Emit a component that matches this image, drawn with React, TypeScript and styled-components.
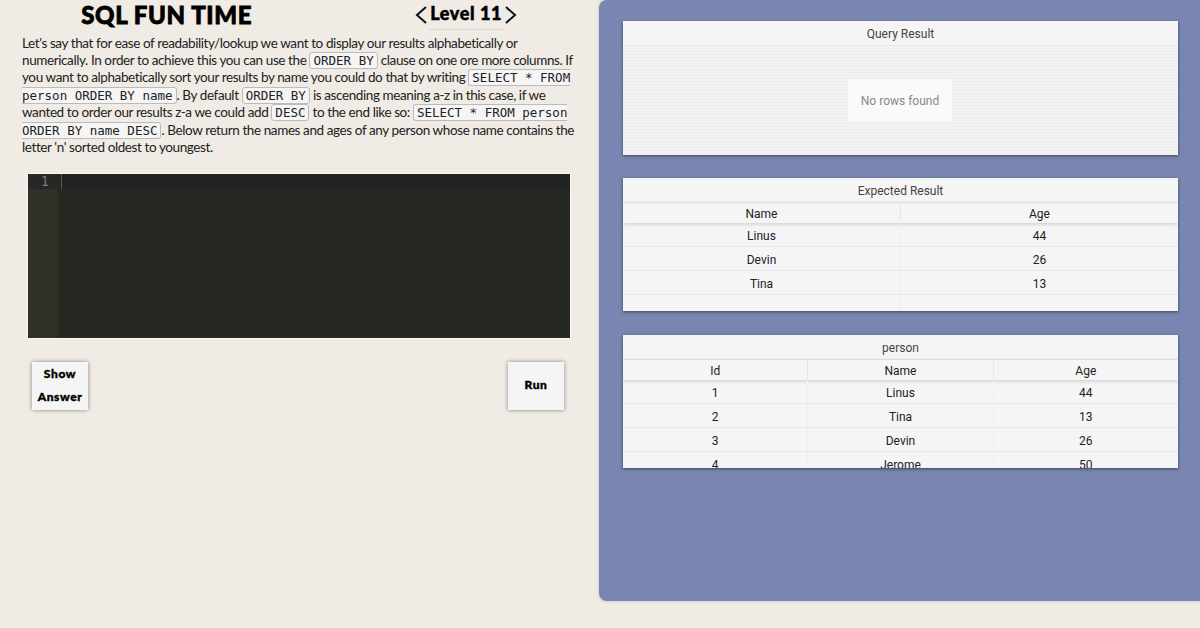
import * as React from 'react';
import styled, { createGlobalStyle } from 'styled-components';

const GlobalStyle = createGlobalStyle`
  html, body {
    margin: 0;
    padding: 0;
    height: 100%;
    background: #f0ebe4;
  }
`;

const Page = styled.div`
  display: flex;
  width: 1200px;
  height: 628px;
  overflow: hidden;
`;

const LeftColumn = styled.div`
  width: 599px;
  flex-shrink: 0;
`;

const Header = styled.div`
  display: flex;
  height: 32px;
`;

const Title = styled.h1`
  width: 335px;
  margin: 0;
  font-family: "Lato", sans-serif;
  font-weight: 900;
  font-size: 24px;
  line-height: 29px;
  letter-spacing: 0.6px;
  text-align: center;
  color: #000;
  -webkit-text-stroke: 0.8px #000;
`;

const LevelPicker = styled.div`
  width: 267px;
  height: 29px;
  display: flex;
  justify-content: center;
  align-items: center;
  gap: 2px;
`;

const Chevron = styled.svg`
  width: 12px;
  height: 18px;
  fill: none;
  stroke: #111;
  stroke-width: 2;
`;

const LevelLabel = styled.div`
  height: 29px;
  padding: 0 1px;
  font-family: "Lato", sans-serif;
  font-weight: 900;
  font-size: 18px;
  line-height: 27px;
  letter-spacing: 0.6px;
  color: #000;
  -webkit-text-stroke: 0.5px #000;
  box-shadow: 0 1px 1px rgba(0, 0, 0, 0.08);
`;

const Description = styled.p`
  width: 556px;
  margin: 3px 0 0 22px;
  font-family: "Lato", sans-serif;
  font-size: 13.5px;
  letter-spacing: -0.4px;
  line-height: 16.5px;
  color: #222;
`;

const Code = styled.code`
  font-family: "DejaVu Sans Mono", monospace;
  font-size: 12.5px;
  letter-spacing: 0;
  padding: 0 3px;
  background: #f5f5f5;
  border: 1px solid #bbb;
  border-radius: 3px;
`;

const Editor = styled.div`
  display: flex;
  width: 542px;
  height: 164px;
  margin: 18px 0 0 28px;
  background: #272822;
  box-shadow: 0 0 0 1px #faf7ee;
`;

const Gutter = styled.div`
  width: 30px;
  background: #2f3129;
`;

const GutterLine = styled.div`
  height: 15px;
  padding-right: 9px;
  background: #272727;
  font-family: "DejaVu Sans Mono", monospace;
  font-size: 13.5px;
  line-height: 15px;
  text-align: right;
  color: #777;
`;

const CodeArea = styled.div`
  flex: 1;
`;

const ActiveLine = styled.div`
  height: 15px;
  background: #222;
  border-left: 1px solid #555;
  margin-left: 3px;
`;

const Buttons = styled.div`
  display: flex;
  justify-content: space-between;
  width: 532px;
  margin: 24px 0 0 32px;
`;

const ActionButton = styled.button`
  width: 56px;
  height: 48px;
  padding: 0 0 2px;
  border: none;
  background: #f5f5f5;
  box-shadow: 0 0 4px rgba(0, 0, 0, 0.45);
  font-family: "Lato", sans-serif;
  font-weight: 900;
  font-size: 12px;
  line-height: 23px;
  letter-spacing: 0.6px;
  color: #000;
  -webkit-text-stroke: 0.4px #000;
`;

const ResultPanel = styled.div`
  flex: 1;
  height: 601px;
  padding: 21px 22px 0 24px;
  box-sizing: border-box;
  display: flex;
  flex-direction: column;
  background: #7886b1;
  border-radius: 8px 0 0 8px;
  box-shadow: 0 0 3px rgba(0, 0, 0, 0.25);
`;

const TableCard = styled.div<{ $height: number; $gap: number }>`
  height: ${(p) => p.$height}px;
  margin-bottom: ${(p) => p.$gap}px;
  flex-shrink: 0;
  overflow: hidden;
  background: #f5f5f5;
  box-shadow: 0 1px 3px rgba(0, 0, 0, 0.5);
  font-family: "Roboto", sans-serif;
  font-size: 12px;
  color: #222;
`;

const TableTitle = styled.div`
  height: 24px;
  line-height: 27px;
  text-align: center;
  color: #444;
  border-bottom: 1px solid #e6e6e6;
`;

const Row = styled.div<{ $head?: boolean }>`
  position: relative;
  display: flex;
  height: ${(p) => (p.$head ? 20 : 23)}px;
  line-height: ${(p) => (p.$head ? 22 : 26)}px;
  border-bottom: ${(p) => (p.$head ? 'none' : '1px solid #eaeaea')};
  box-shadow: ${(p) => (p.$head ? '0 1px 4px rgba(0, 0, 0, 0.18)' : 'none')};
`;

const Cell = styled.div<{ $head?: boolean }>`
  flex: 1;
  text-align: center;
  border-right: 1px solid ${(p) => (p.$head ? '#e6e6e6' : '#f0f0f0')};
  &:last-child {
    border-right: none;
  }
`;

const EmptyBody = styled.div`
  height: 109px;
  display: flex;
  align-items: center;
  justify-content: center;
  background: repeating-linear-gradient(to bottom, #f3f3f3 0, #f3f3f3 2px, #ececec 2px, #ececec 3px);
`;

const Overlay = styled.div`
  width: 104px;
  height: 42px;
  margin: 0 1px 1px 0;
  line-height: 44px;
  text-align: center;
  background: #fafafa;
  color: #888;
`;

const expected = [
  ['Linus', '44'],
  ['Devin', '26'],
  ['Tina', '13'],
  ['', ''],
];

const people = [
  ['1', 'Linus', '44'],
  ['2', 'Tina', '13'],
  ['3', 'Devin', '26'],
  ['4', 'Jerome', '50'],
];

const DataRows = ({ head, rows }: { head: string[]; rows: string[][] }) => (
  <>
    <Row $head>
      {head.map((h) => (
        <Cell $head key={h}>{h}</Cell>
      ))}
    </Row>
    {rows.map((row, i) => (
      <Row key={i}>
        {row.map((value, j) => (
          <Cell key={j}>{value}</Cell>
        ))}
      </Row>
    ))}
  </>
);

export default function App() {
  return (
    <Page>
      <GlobalStyle />
      <LeftColumn>
        <Header>
          <Title>SQL FUN TIME</Title>
          <LevelPicker>
            <Chevron viewBox="0 0 12 18">
              <polyline points="11,1 2,9 11,17" />
            </Chevron>
            <LevelLabel>Level 11</LevelLabel>
            <Chevron viewBox="0 0 12 18">
              <polyline points="1,1 10,9 1,17" />
            </Chevron>
          </LevelPicker>
        </Header>
        <Description>
          Let's say that for ease of readability/lookup we want to display our results alphabetically or
          <br />
          numerically. In order to achieve this you can use the <Code>ORDER BY</Code> clause on one ore more columns. If
          <br />
          you want to alphabetically sort your results by name you could do that by writing{' '}
          <Code>SELECT * FROM person ORDER BY name</Code>. By default <Code>ORDER BY</Code> is ascending meaning
          a-z in this case, if we
          <br />
          wanted to order our results z-a we could add <Code>DESC</Code> to the end like
          so: <Code>SELECT * FROM person ORDER BY name DESC</Code>. Below return the names and ages of any person
          whose name contains the
          <br />
          letter 'n' sorted oldest to youngest.
        </Description>
        <Editor>
          <Gutter>
            <GutterLine>1</GutterLine>
          </Gutter>
          <CodeArea>
            <ActiveLine />
          </CodeArea>
        </Editor>
        <Buttons>
          <ActionButton>Show Answer</ActionButton>
          <ActionButton>Run</ActionButton>
        </Buttons>
      </LeftColumn>
      <ResultPanel>
        <TableCard $height={134} $gap={23}>
          <TableTitle>Query Result</TableTitle>
          <EmptyBody>
            <Overlay>No rows found</Overlay>
          </EmptyBody>
        </TableCard>
        <TableCard $height={133} $gap={24}>
          <TableTitle>Expected Result</TableTitle>
          <DataRows head={['Name', 'Age']} rows={expected} />
        </TableCard>
        <TableCard $height={133} $gap={0}>
          <TableTitle>person</TableTitle>
          <DataRows head={['Id', 'Name', 'Age']} rows={people} />
        </TableCard>
      </ResultPanel>
    </Page>
  );
}
